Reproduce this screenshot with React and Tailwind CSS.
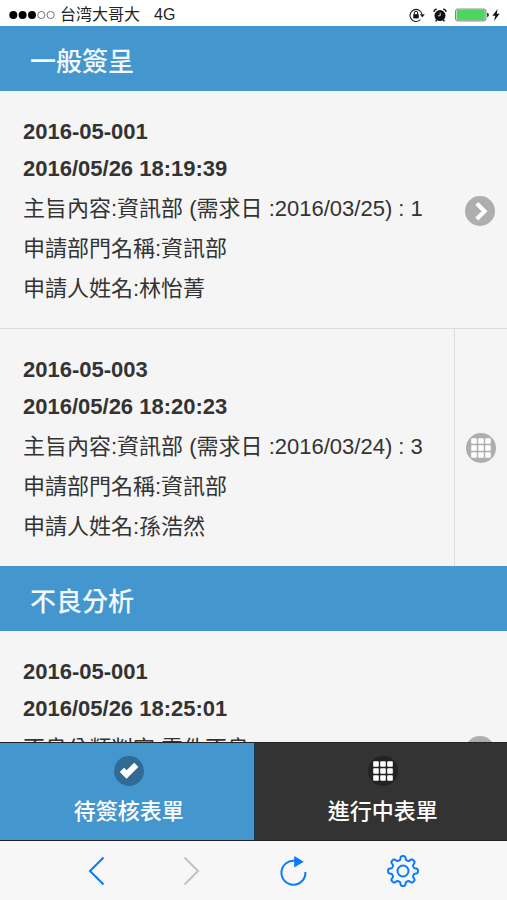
const sections = [
  {
    title: "一般簽呈",
    forms: [
      {
        number: "2016-05-001",
        time: "2016/05/26 18:19:39",
        lines: ["主旨內容:資訊部 (需求日 :2016/03/25) : 1", "申請部門名稱:資訊部", "申請人姓名:林怡菁"],
      },
      {
        number: "2016-05-003",
        time: "2016/05/26 18:20:23",
        lines: ["主旨內容:資訊部 (需求日 :2016/03/24) : 3", "申請部門名稱:資訊部", "申請人姓名:孫浩然"],
        split: true,
      },
    ],
  },
  {
    title: "不良分析",
    forms: [
      {
        number: "2016-05-001",
        time: "2016/05/26 18:25:01",
        lines: ["不良分類判定:零件不良"],
      },
    ],
  },
];

// eight-toothed gear outline around (16, 16)
const gearPoints = Array.from({ length: 160 }, (_, i) => {
  const angle = (i / 160) * Math.PI * 2;
  const radius = 13.1 + 1.9 * Math.tanh(2.2 * Math.cos(8 * angle));
  return `${(16 + radius * Math.sin(angle)).toFixed(2)},${(16 - radius * Math.cos(angle)).toFixed(2)}`;
}).join(" ");

function ChevronDisc() {
  return (
    <svg viewBox="0 0 30 30" className="size-[30px] shrink-0" aria-hidden="true">
      <circle cx="15" cy="15" r="15" fill="#aeaeae" />
      <path d="M11.8 7.4l7.8 7.8-7.8 7.8" fill="none" stroke="#fff" strokeWidth="4.2" />
    </svg>
  );
}

function GridDisc({ fill }) {
  return (
    <svg viewBox="0 0 30 30" className="size-[30px] shrink-0" aria-hidden="true">
      <circle cx="15" cy="15" r="15" fill={fill} />
      {[5.2, 12.2, 19.2].map((y) =>
        [5.2, 12.2, 19.2].map((x) => (
          <rect key={`${x}-${y}`} x={x} y={y} width="5.6" height="5.6" rx="0.8" fill="#fff" />
        ))
      )}
    </svg>
  );
}

function CheckDisc() {
  return (
    <svg viewBox="0 0 30 30" className="size-[30px] shrink-0" aria-hidden="true">
      <circle cx="15" cy="15" r="15" fill="#316a95" />
      <path d="M24.4 11L20.2 6.8l-7.6 7.4-2.6-2.4L5.8 16l6.7 6.8z" fill="#fff" />
    </svg>
  );
}

function StatusBar() {
  return (
    <div className="flex h-[26px] shrink-0 items-center justify-between bg-white pt-[3px] pr-[7px] pl-[9px] text-[16px] leading-[20px] text-[#222]">
      <div className="flex items-center">
        <svg viewBox="0 0 46 10" className="mr-[5px] h-[10px] w-[46px]" aria-hidden="true">
          <circle cx="4.3" cy="5" r="4" fill="#000" />
          <circle cx="13.6" cy="5" r="4" fill="#000" />
          <circle cx="23" cy="5" r="4" fill="#000" />
          <circle cx="32.3" cy="5" r="3.6" fill="none" stroke="#555" strokeWidth="0.8" />
          <circle cx="41.6" cy="5" r="3.6" fill="none" stroke="#555" strokeWidth="0.8" />
        </svg>
        <span lang="zh-Hans" className="font-['Liberation_Sans','Noto_Sans_CJK_SC',sans-serif]">
          台湾大哥大
        </span>
        <span className="ml-[14px]">4G</span>
      </div>

      <div className="flex items-center">
        <svg viewBox="0 0 16 14" className="mr-2 h-[14px] w-[16px]" aria-hidden="true">
          <path d="M11.5 11.5A6 6 0 1 1 13 6.5" fill="none" stroke="#222" strokeWidth="1.1" />
          <path d="M10.8 6.2h5L13.3 9.4z" fill="#222" />
          <rect x="4.3" y="6.2" width="5.4" height="4.2" fill="#111" />
          <path d="M5.3 6.4V5a1.7 1.7 0 0 1 3.4 0v1.4" fill="none" stroke="#111" strokeWidth="1" />
        </svg>
        <svg viewBox="0 0 14 14" className="mr-2 size-[14px]" aria-hidden="true">
          <circle cx="7" cy="7.6" r="5.5" fill="#111" />
          <path d="M0.8 3.9Q1.2 1.4 3.8 1.1M13.2 3.9Q12.8 1.4 10.2 1.1" fill="none" stroke="#111" strokeWidth="1.3" />
          <path d="M3.6 12l-1.1 1.4M10.4 12l1.1 1.4" stroke="#111" strokeWidth="1.4" />
          <path d="M7.2 4.6v3.2H5" fill="none" stroke="#fff" strokeWidth="0.8" />
        </svg>
        <svg viewBox="0 0 34 14" className="mr-[3px] h-[14px] w-[34px]" aria-hidden="true">
          <rect x="0.6" y="1.1" width="30.3" height="11.8" rx="1.8" fill="#fff" stroke="#777" strokeWidth="1" />
          <rect x="1.6" y="2.1" width="28.3" height="9.8" rx="1" fill="#4cd55f" />
          <path d="M32 4.8q2 0.6 2 2.2t-2 2.2z" fill="#333" />
        </svg>
        <svg viewBox="0 0 8 14" className="h-[14px] w-[8px]" aria-hidden="true">
          <path d="M5.6 1L0.4 7.8h2.9L2 13l5.6-7.2H4.7z" fill="#111" />
        </svg>
      </div>
    </div>
  );
}

function FormText({ form }) {
  return (
    <div className="min-w-0 flex-1 self-start text-[22px] text-[#333]">
      <h3 className="leading-[37px] font-bold">{form.number}</h3>
      <p className="leading-[37px] font-bold">{form.time}</p>
      <div className="pt-[2px]">
        {form.lines.map((line) => (
          <p key={line} className="truncate leading-[40px]">
            {line}
          </p>
        ))}
      </div>
    </div>
  );
}

function FormRow({ form }) {
  if (form.split) {
    return (
      <li className="flex min-h-[237px]">
        <a href="#form" className="flex min-w-0 flex-1 items-center pt-[22px] pb-[19px] pl-[23px]">
          <FormText form={form} />
        </a>
        <button
          type="button"
          aria-label="更多"
          className="flex w-[53px] items-center justify-center border-l border-[#dcdcdc]"
        >
          <GridDisc fill="#aeaeae" />
        </button>
      </li>
    );
  }

  return (
    <li>
      <a href="#form" className="flex min-h-[237px] items-center pt-[22px] pr-3 pb-[19px] pl-[23px]">
        <FormText form={form} />
        <ChevronDisc />
      </a>
    </li>
  );
}

function Tab({ icon, label, className }) {
  return (
    <button
      type="button"
      className={`flex flex-col items-center gap-[11px] pt-[13px] pb-[13px] pl-1 text-[22px] leading-[30px] font-medium text-white ${className}`}
    >
      {icon}
      {label}
    </button>
  );
}

function BrowserBar() {
  return (
    <div className="flex h-[59px] shrink-0 items-center justify-between bg-[#f7f7f7] px-[88px]">
      <button type="button" aria-label="上一頁">
        <svg viewBox="0 0 16 30" className="h-[30px] w-[16px]" fill="none" stroke="#0b79ff" strokeWidth="2">
          <path d="M15.5 1.5L2 15l13.5 13.5" />
        </svg>
      </button>
      <button type="button" aria-label="下一頁" disabled>
        <svg viewBox="0 0 16 30" className="h-[30px] w-[16px]" fill="none" stroke="#c3c3c3" strokeWidth="2">
          <path d="M0.5 1.5L14 15 0.5 28.5" />
        </svg>
      </button>
      <button type="button" aria-label="重新整理">
        <svg viewBox="0 0 27 30" className="h-[30px] w-[27px]">
          <path d="M15 4.8A12 12 0 1 0 25.4 16" fill="none" stroke="#0b79ff" strokeWidth="2" />
          <path d="M14.2 0l9.6 5.8-9.6 5.8z" fill="#0b79ff" />
        </svg>
      </button>
      <button type="button" aria-label="設定">
        <svg viewBox="0 0 32 32" className="size-8" fill="none" stroke="#0b79ff" strokeWidth="2" strokeLinejoin="round">
          <polygon points={gearPoints} />
          <circle cx="16" cy="16" r="5.5" />
        </svg>
      </button>
    </div>
  );
}

function App() {
  return (
    <div
      lang="zh-Hant"
      className="flex h-screen flex-col bg-[#f5f5f5] font-['Liberation_Sans','Noto_Sans_CJK_TC',sans-serif]"
    >
      <StatusBar />

      <main className="min-h-0 flex-1 overflow-y-auto [scrollbar-width:none]">
        {sections.map((section) => (
          <section key={section.title}>
            <h2 className="bg-[#4496ce] pt-[18px] pb-[11px] pl-[30px] text-[26px] leading-[36px] font-medium text-[#f3f9fd]">
              {section.title}
            </h2>
            <ul className="divide-y divide-[#dcdcdc]">
              {section.forms.map((form) => (
                <FormRow key={form.number} form={form} />
              ))}
            </ul>
          </section>
        ))}
      </main>

      <nav className="grid shrink-0 grid-cols-2 border-y border-[#222]">
        <Tab icon={<CheckDisc />} label="待簽核表單" className="bg-[#4496ce]" />
        <Tab
          icon={<GridDisc fill="#222222" />}
          label="進行中表單"
          className="border-l border-[#183a50] bg-[#333]"
        />
      </nav>

      <BrowserBar />
    </div>
  );
}

export default App;
